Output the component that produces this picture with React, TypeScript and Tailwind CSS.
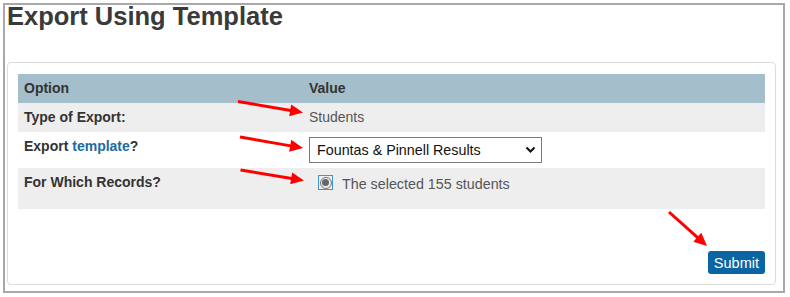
import React from "react";

type Pt = [number, number];

function Arrow({ from, to }: { from: Pt; to: Pt }) {
  const dx = to[0] - from[0];
  const dy = to[1] - from[1];
  const len = Math.sqrt(dx * dx + dy * dy);
  const ux = dx / len;
  const uy = dy / len;
  const headLen = 13;
  const headW = 6;
  const bx = to[0] - ux * headLen;
  const by = to[1] - uy * headLen;
  const px = -uy;
  const py = ux;
  const pts = `${to[0]},${to[1]} ${bx + px * headW},${by + py * headW} ${bx - px * headW},${by - py * headW}`;
  return (
    <g>
      <line x1={from[0]} y1={from[1]} x2={bx + ux * 2} y2={by + uy * 2} stroke="#ff0000" strokeWidth={3} />
      <polygon points={pts} fill="#ff0000" />
    </g>
  );
}

export default function App() {
  return (
    <div className="relative w-[790px] h-[297px] bg-white font-['Liberation_Sans',Arial,sans-serif] overflow-hidden">
      <div className="ml-[3px] mt-[3px] w-[782px] h-[290px] border-2 border-[#a8a8a8] flex flex-col">
        <div className="h-[57px] pl-[2px]">
          <h1 className="text-[25.5px] leading-none font-bold text-[#3a3a3a] -mt-px">Export Using Template</h1>
        </div>
        <div className="ml-[2px] w-[769px] h-[223px] border border-[#dcdcdc] rounded-[4px] pt-[11px] px-[10px] flex flex-col">
          <div className="grid grid-cols-[285px_1fr] text-[14px] leading-[20px]">
            <div className="h-[29px] bg-[#a4bfcb] pt-[4px] pl-[6px] font-bold text-[#333]">Option</div>
            <div className="h-[29px] bg-[#a4bfcb] pt-[4px] pl-[6px] font-bold text-[#333]">Value</div>

            <div className="h-[29px] bg-[#eeeeee] pt-[4px] pl-[6px] font-bold text-[#333]">Type of Export:</div>
            <div className="h-[29px] bg-[#eeeeee] pt-[4px] pl-[6px] text-[#555]">Students</div>

            <div className="h-[36px] bg-white pt-[4px] pl-[6px] font-bold text-[#333]">
              Export <span className="text-[#1c6aa3]">template</span>?
            </div>
            <div className="h-[36px] bg-white pt-[5px] pl-[6px]">
              <div className="w-[233px] h-[26px] border border-[#7a7a7a] bg-white flex items-center justify-between pl-[7px] pr-[5px]">
                <span className="text-[#111] text-[14.3px] leading-[20px]">Fountas &amp; Pinnell Results</span>
                <svg width="11" height="8" viewBox="0 0 11 8">
                  <path d="M1.5 1.5 L5.5 5.5 L9.5 1.5" fill="none" stroke="#111" strokeWidth="2" />
                </svg>
              </div>
            </div>

            <div className="h-[41px] bg-[#eeeeee] pt-[4px] pl-[6px] font-bold text-[#333]">For Which Records?</div>
            <div className="h-[41px] bg-[#eeeeee] pt-[6px] pl-[15px] flex items-start text-[#555]">
              <span className="mt-px w-[15px] h-[15px] border border-[#3e97dc] flex items-center justify-center shrink-0">
                <span className="w-[12px] h-[12px] rounded-full border border-[#777] bg-[#ececec] flex items-center justify-center">
                  <span className="w-[7px] h-[7px] rounded-full bg-[#666]" />
                </span>
              </span>
              <span className="ml-[9px] text-[14.3px]">The selected 155 students</span>
            </div>
          </div>
          <div className="flex justify-end mt-[42px]">
            <button className="h-[23px] px-[6px] bg-[#0b65a2] text-white text-[14.5px] leading-[20px] rounded-[3px]">Submit</button>
          </div>
        </div>
      </div>
      <svg className="absolute inset-0 pointer-events-none" width="790" height="297">
        <Arrow from={[238, 101.5]} to={[303, 112.5]} />
        <Arrow from={[240, 137]} to={[303, 148]} />
        <Arrow from={[240.5, 170]} to={[304, 180.5]} />
        <Arrow from={[669, 212]} to={[707, 246]} />
      </svg>
    </div>
  );
}
